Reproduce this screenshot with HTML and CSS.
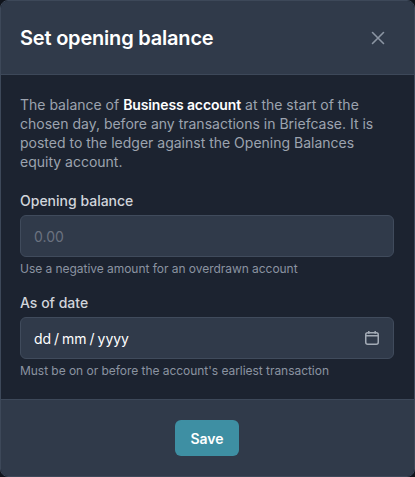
FILE: index.html
```html
<!DOCTYPE html>
<html lang="en">
<head>
    <meta charset="UTF-8">
    <meta name="viewport" content="width=device-width, initial-scale=1.0">
    <title>Set opening balance</title>
    <link rel="stylesheet" href="styles.css">
</head>
<body>
    <div class="modal">
        <header class="modal-header">
            <h2 class="modal-title">Set opening balance</h2>
            <svg class="close-icon" width="20" height="20" viewBox="0 0 20 20" fill="none" stroke="currentColor" stroke-width="1.6" stroke-linecap="round">
                <path d="M4.5 4.5l11 11M15.5 4.5l-11 11"/>
            </svg>
        </header>
        <div class="modal-body">
            <p class="intro">The balance of <strong>Business account</strong> at the start of the chosen day, before any transactions in Briefcase. It is posted to the ledger against the Opening Balances equity account.</p>
            <div class="field">
                <label class="field-label" for="balance">Opening balance</label>
                <input class="input" id="balance" type="text" placeholder="0.00">
                <p class="hint">Use a negative amount for an overdrawn account</p>
            </div>
            <div class="field">
                <label class="field-label">As of date</label>
                <div class="input date-input">
                    <span class="date-text">dd / mm / yyyy</span>
                    <svg class="calendar-icon" width="16" height="16" viewBox="0 0 16 16" fill="none" stroke="currentColor" stroke-width="1.5">
                        <rect x="1.75" y="2.75" width="12.5" height="11.5" rx="2"/>
                        <path d="M1.75 5.8h12.5M4.8 1v2.8M11.2 1v2.8"/>
                    </svg>
                </div>
                <p class="hint">Must be on or before the account's earliest transaction</p>
            </div>
        </div>
        <footer class="modal-footer">
            <button class="save-btn">Save</button>
        </footer>
    </div>
</body>
</html>
```

FILE: styles.css
```css
* {
    box-sizing: border-box;
}

html, body {
    height: 100%;
}

body {
    margin: 0;
    background-color: #10141c;
    font-family: Inter, "Liberation Sans", sans-serif;
}

.modal {
    display: flex;
    flex-direction: column;
    height: 477px;
    background-color: #1c2330;
    border: 1px solid #3d4859;
    border-radius: 8px;
    overflow: hidden;
}

.modal-header {
    display: flex;
    justify-content: space-between;
    align-items: center;
    height: 74px;
    padding: 0 26px 0 19px;
    background-color: #303a4a;
    border-bottom: 1px solid #3d4859;
}

.modal-title {
    margin: 0;
    font-size: 20px;
    font-weight: 600;
    letter-spacing: -0.2px;
    color: #fff;
}

.close-icon {
    color: #8b95a3;
}

.modal-body {
    flex: 1;
    padding: 20px 20px 0 19px;
}

.intro {
    margin: 0 0 20px;
    font-size: 14px;
    line-height: 19px;
    color: #9ca3af;
}

.intro strong {
    font-weight: 600;
    letter-spacing: -0.12px;
    color: #fff;
}

.field {
    margin-bottom: 16px;
}

.field-label {
    display: block;
    margin-bottom: 4px;
    font-size: 14px;
    font-weight: 500;
    line-height: 20px;
    color: #d1d5db;
}

.input {
    width: 100%;
    height: 42px;
    padding: 0 13px;
    display: flex;
    align-items: center;
    background-color: #303a4a;
    border: 1px solid #404b5c;
    border-radius: 6px;
    font-family: inherit;
    font-size: 14px;
    color: #fff;
}

.input::placeholder {
    color: #6b7280;
}

.date-input {
    justify-content: space-between;
}

.date-text {
    word-spacing: -1px;
}

.calendar-icon {
    color: #a3abb6;
}

.hint {
    margin: 4px 0 0;
    font-size: 12px;
    line-height: 16px;
    letter-spacing: -0.04px;
    color: #8b93a1;
}

.modal-footer {
    display: flex;
    justify-content: center;
    align-items: flex-start;
    height: 77px;
    padding: 20px 1px 0 0;
    background-color: #303a4a;
    border-top: 1px solid #3d4859;
}

.save-btn {
    width: 64px;
    height: 36px;
    background-color: #3e8fa3;
    border: none;
    border-radius: 6px;
    font-family: inherit;
    font-size: 14px;
    font-weight: 600;
    color: #fff;
}
```
